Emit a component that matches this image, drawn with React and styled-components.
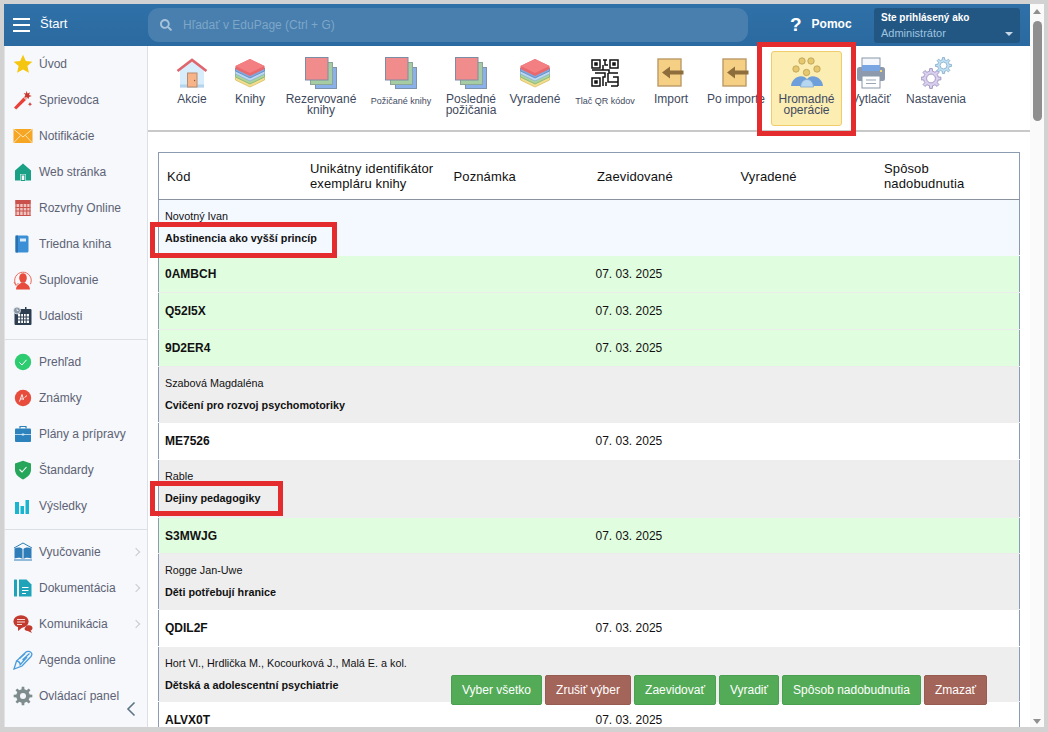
import React from 'react';
import styled, { createGlobalStyle } from 'styled-components';
import { FaSearch } from 'react-icons/fa';

const GlobalStyle = createGlobalStyle`
    html, body {
        margin: 0;
        height: 100%;
        overflow: hidden;
        background: #d2d2d2;
        font-family: "Liberation Sans", Arial, sans-serif;
    }
`;

// gear outline, used by the sidebar and the toolbar
function gearPath(cx, cy, outer, inner, teeth) {
    let d = '';
    const step = (Math.PI * 2) / teeth;
    for (let i = 0; i < teeth; i++) {
        const a = i * step;
        const pts = [
            [inner, a - step * 0.5],
            [inner, a - step * 0.27],
            [outer, a - step * 0.17],
            [outer, a + step * 0.17],
            [inner, a + step * 0.27],
        ];
        pts.forEach(([r, t], j) => {
            const x = (cx + r * Math.cos(t)).toFixed(2);
            const y = (cy + r * Math.sin(t)).toFixed(2);
            d += (i === 0 && j === 0 ? 'M' : 'L') + x + ' ' + y + ' ';
        });
    }
    return d + 'Z';
}

/* ---------- toolbar icons ---------- */

function HouseIcon() {
    return (
        <svg width="32" height="32" viewBox="0 0 32 32">
            <path d="M4 13 L16 3.5 L28 13 V30.5 H4 Z" fill="#d8edfc" />
            <path d="M4 27.5 H28 V30.5 H4 Z" fill="#b4d3ec" />
            <path d="M1.5 14 L16 3 L30.5 14" fill="none" stroke="#e0666e" strokeWidth="2.6" />
            <rect x="11.5" y="16" width="9.5" height="14" fill="#f6b488" stroke="#b98a6c" strokeWidth="1" />
            <circle cx="18.6" cy="23.5" r="0.7" fill="#8a5a3a" />
        </svg>
    );
}

function StackIcon() {
    const layers = [
        { y: 14, c: '#f3de8f', s: '#d9bd62' },
        { y: 11, c: '#a9d49b', s: '#7fb272' },
        { y: 8, c: '#bcd9f3', s: '#8db1d3' },
        { y: 5, c: '#7fa9e2', s: '#5f86bd' },
    ];
    return (
        <svg width="32" height="32" viewBox="0 0 32 32">
            {layers.map((l) => (
                <path
                    key={l.y}
                    d={`M1.5 ${l.y + 6} V${l.y + 9} L16 ${l.y + 16} L30.5 ${l.y + 9} V${l.y + 6} L16 ${l.y} Z`}
                    fill={l.c}
                    stroke={l.s}
                    strokeWidth="0.8"
                />
            ))}
            <path d="M1.5 9 L16 2 L30.5 9 V12 L16 19 L1.5 12 Z" fill="#e8686c" />
            <path d="M1.5 9 L16 2 L30.5 9 L16 16 Z" fill="#f37f82" />
        </svg>
    );
}

function SquaresIcon() {
    return (
        <svg width="32" height="32" viewBox="0 0 32 32">
            <rect x="10.5" y="10.5" width="21" height="21" fill="#8bb1ea" stroke="#7d93ad" />
            <rect x="5.5" y="5.5" width="22" height="22" fill="#a6cca4" stroke="#8ba596" />
            <rect x="0.5" y="0.5" width="22.5" height="22.5" fill="#f18c8c" stroke="#7a8ca6" />
        </svg>
    );
}

function QrIcon() {
    return (
        <svg width="28" height="28" viewBox="0 0 28 28" fill="none" stroke="#111" strokeWidth="1.5">
            <rect x="1" y="1" width="8" height="8" />
            <rect x="19" y="1" width="8" height="8" />
            <rect x="1" y="19" width="8" height="8" />
            <rect x="4" y="4" width="2" height="2" fill="#111" />
            <rect x="22" y="4" width="2" height="2" fill="#111" />
            <rect x="4" y="22" width="2" height="2" fill="#111" />
            <path d="M12 1 H16 M14 1 V6 H17 M12 6 V11 H1 M12 11 H18 V14 H27 M4 14 H14 V18 H12 V27 M17 14 V23 H27 M22 18 H27 V27 M20 27 H27 M15 27 V23" />
        </svg>
    );
}

function ImportIcon() {
    return (
        <svg width="28" height="30" viewBox="0 0 28 30">
            <rect x="1" y="1" width="23" height="27" fill="#f4cf84" stroke="#bc9a68" strokeWidth="1.4" />
            <path d="M5 14.5 L13 8.5 V12.5 H26.5 V16.5 H13 V20.5 Z" fill="#8e6d3c" />
        </svg>
    );
}

function PeopleIcon() {
    const heads = [[11, 4], [20, 4], [5, 12], [26, 12], [15.5, 15.5]];
    return (
        <svg width="32" height="32" viewBox="0 0 32 32">
            {heads.map(([x, y]) => (
                <circle key={x} cx={x} cy={y} r="3.2" fill="#e6c76e" stroke="#b89f55" strokeWidth="0.8" />
            ))}
            <path d="M0 29 C0.5 20 13 15 17 24 L16 29 Z" fill="#6f9fdb" />
            <path d="M32 29 C31.5 20 19 15 15 24 L16 29 Z" fill="#6f9fdb" />
            <path d="M9.5 30 C10 20 22 20 22.5 30 Z" fill="#b6d6f2" stroke="#83a8cc" strokeWidth="0.8" />
        </svg>
    );
}

function PrinterIcon() {
    return (
        <svg width="30" height="32" viewBox="0 0 30 32">
            <rect x="6" y="1" width="18" height="12" fill="#f4f7fb" stroke="#8a97a8" />
            <rect x="1" y="10" width="28" height="14" rx="2.5" fill="#8d9aae" />
            <rect x="6" y="8" width="18" height="6" fill="#79a6e2" />
            <rect x="24" y="13" width="2" height="2" fill="#f3d774" />
            <rect x="6" y="19" width="18" height="12" fill="#fff" stroke="#8a97a8" />
            <path d="M10 23 H20 M10 26.5 H20" stroke="#9aa6b6" strokeWidth="1.2" />
        </svg>
    );
}

function GearsIcon() {
    return (
        <svg width="31" height="32" viewBox="0 0 31 32">
            <path d={gearPath(10, 21.5, 10, 7.4, 8)} fill="#d9d0f0" stroke="#9387b6" strokeWidth="0.8" />
            <circle cx="10" cy="21.5" r="4.4" fill="#fff" stroke="#9387b6" strokeWidth="0.8" />
            <path d={gearPath(22.5, 8.5, 8, 5.8, 8)} fill="#bfe0f4" stroke="#7da7c6" strokeWidth="0.8" />
            <circle cx="22.5" cy="8.5" r="3.4" fill="#fff" stroke="#7da7c6" strokeWidth="0.8" />
        </svg>
    );
}

/* ---------- sidebar icons ---------- */

const side = { width: 20, height: 20, viewBox: '0 0 20 20' };

const sideIcons = {
    star: (
        <svg {...side}>
            <path d="M10 .8 L12.8 7 L19.4 7.7 L14.4 12.1 L15.9 18.8 L10 15.4 L4.1 18.8 L5.6 12.1 L.6 7.7 L7.2 7 Z" fill="#f5c60f" />
        </svg>
    ),
    wand: (
        <svg {...side}>
            <path d="M1 17.5 L10.5 7.5 L13 10 L3.2 19.5 Z" fill="#e8413a" />
            <path d="M10.5 7.5 L12.5 5.5 L15 8 L13 10 Z" fill="#f0a9a0" />
            <path d="M13.5 .8 L14.5 3.4 L17 2.4 L16 5 L18.8 6 L16 7 L15.6 9 L13.8 7 L11.4 7.4 L12.4 5 L10.6 3 L13 3.6 Z" fill="#c9342d" />
            <path d="M17 12 L17.6 13.6 L19.2 14.2 L17.6 14.8 L17 16.4 L16.4 14.8 L14.8 14.2 L16.4 13.6 Z" fill="#c9342d" />
        </svg>
    ),
    mail: (
        <svg {...side} viewBox="0 0 20 16" height="16">
            <rect x="0.5" y="1" width="19" height="14" fill="#f6a623" />
            <path d="M0.5 1 L10 9 L19.5 1 M0.5 15 L7.5 7.5 M19.5 15 L12.5 7.5" fill="none" stroke="#fbe3b5" strokeWidth="1" />
        </svg>
    ),
    home: (
        <svg {...side}>
            <path d="M10 1.5 L18 8.5 V18.5 H12.8 V12 H7.2 V18.5 H2 V8.5 Z" fill="#19a085" />
            <rect x="8.2" y="13" width="3.6" height="5.5" fill="none" stroke="#19a085" />
        </svg>
    ),
    grid: (
        <svg {...side}>
            <rect x="2.5" y="2" width="15" height="16" fill="#efc4c0" />
            <rect x="2.5" y="2" width="15" height="4" fill="#c9514c" />
            <path d="M2.5 9.5 H17.5 M2.5 13 H17.5 M2.5 17.5 H17.5 M3 2 V18 M6.7 2 V18 M10.2 2 V18 M13.8 2 V18 M17 2 V18" stroke="#c9514c" strokeWidth="1" />
        </svg>
    ),
    notebook: (
        <svg {...side}>
            <rect x="2.5" y="1.5" width="13" height="17" rx="1.5" fill="#3b8fd6" />
            <rect x="2.5" y="1.5" width="2.5" height="17" fill="#2a70b0" />
            <rect x="7" y="4.5" width="6" height="3" fill="#d8ecfa" />
        </svg>
    ),
    person: (
        <svg {...side}>
            <path d="M3 15 A8.3 8.3 0 1 1 17.4 14.2" fill="none" stroke="#ec6a5c" strokeWidth="1" />
            <path d="M1 12 L3 15.5 L5.5 13" fill="none" stroke="#ec6a5c" strokeWidth="1" />
            <ellipse cx="10" cy="8" rx="3.8" ry="4.8" fill="#e74c3c" />
            <path d="M3 19.5 C3.4 14.4 7 14.6 8 12.6 H12 C13 14.6 16.6 14.4 17 19.5 Z" fill="#e74c3c" />
        </svg>
    ),
    calendar: (
        <svg {...side}>
            <rect x="1.5" y="3" width="17" height="16" rx="1" fill="#2c3e50" />
            <rect x="5" y="8" width="11" height="9" fill="#fff" />
            <path d="M5 11 H16 M5 14 H16 M7.7 8 V17 M10.5 8 V17 M13.2 8 V17" stroke="#2c3e50" strokeWidth="1" />
            <circle cx="4" cy="4.5" r="3.5" fill="#8a98a6" stroke="#f5f7fa" strokeWidth="0.7" />
            <path d="M4 2.5 V4.5 H5.5" stroke="#fff" strokeWidth="0.7" fill="none" />
            <rect x="12" y="1" width="1.5" height="4" fill="#2c3e50" />
        </svg>
    ),
    check: (
        <svg {...side}>
            <circle cx="10" cy="10" r="8.2" fill="#2ecc71" />
            <path d="M6.5 10.5 L9 13 L13.5 7.8" fill="none" stroke="#fff" strokeWidth="1" />
        </svg>
    ),
    marks: (
        <svg {...side}>
            <circle cx="10" cy="10" r="8.2" fill="#e74c3c" />
            <path d="M6.5 13.5 L9 6.5 L10.5 11.5 M7.5 11 H11 M11.5 9.5 L14 7.5" fill="none" stroke="#fff" strokeWidth="0.9" />
        </svg>
    ),
    briefcase: (
        <svg {...side}>
            <path d="M7 4.5 V2.5 H13 V4.5" fill="none" stroke="#2c82bd" strokeWidth="1.2" />
            <rect x="2" y="4.5" width="16" height="13.5" rx="1" fill="#2c82bd" />
            <path d="M2 10.5 H18" stroke="#d5e8f5" strokeWidth="0.8" />
            <rect x="8.5" y="9.5" width="3" height="2" rx="1" fill="#d5e8f5" />
        </svg>
    ),
    shield: (
        <svg {...side}>
            <path d="M10 .8 L18 3.6 V10 C18 14.5 14 17.6 10 19.4 C6 17.6 2 14.5 2 10 V3.6 Z" fill="#25a65a" />
            <path d="M6.5 9.5 L9 12 L13.5 7" fill="none" stroke="#fff" strokeWidth="1.1" />
        </svg>
    ),
    bars: (
        <svg {...side}>
            <rect x="2" y="6" width="4" height="12" fill="#17b5cf" />
            <rect x="7.5" y="10" width="3.5" height="8" fill="#17b5cf" />
            <rect x="12.5" y="4" width="3.5" height="14" fill="#17b5cf" />
        </svg>
    ),
    book: (
        <svg {...side}>
            <path d="M1 6 L10 1 L19 6" fill="none" stroke="#2f7db8" strokeWidth="1" />
            <path d="M1.5 6.5 C5 5 8 5.5 9.5 7 V17 C8 15.8 5 15.4 1.5 16.5 Z" fill="#2f7db8" />
            <path d="M18.5 6.5 C15 5 12 5.5 10.5 7 V17 C12 15.8 15 15.4 18.5 16.5 Z" fill="#2f7db8" />
            <path d="M1 18 H19" stroke="#2f7db8" strokeWidth="1" />
        </svg>
    ),
    doc: (
        <svg {...side}>
            <rect x="1" y="1.5" width="3" height="17" rx="0.6" fill="#1fa3b8" />
            <path d="M6 1.5 H13.5 L18.5 6.5 V18.5 H6 Z" fill="#1fa3b8" />
            <path d="M9 9.5 H15.5 M9 12.5 H15.5 M9 15.5 H13" stroke="#fff" strokeWidth="1.2" />
        </svg>
    ),
    chat: (
        <svg {...side}>
            <ellipse cx="8" cy="7.5" rx="7.6" ry="6.2" fill="#c33a2e" />
            <path d="M5 12 L5 17 L10 13 Z" fill="#c33a2e" />
            <path d="M4 5.5 H12 M4 8 H12 M4 10.5 H9" stroke="#f6dcd8" strokeWidth="1" />
            <path d="M13.5 11.8 C17 10.5 19.5 12 19.5 14 C19.5 15.5 18.5 16.2 17.6 16.6 L19 19 L14.8 17 C12.5 17 11.6 15.8 11.5 14.5 Z" fill="#c33a2e" />
        </svg>
    ),
    pen: (
        <svg {...side}>
            <path d="M1 19 L3.5 11 L13 2 C14.5 .8 17.5 1.5 18.5 3 C19.2 4.3 18.8 5.5 18 6.5 L9 16 Z M1 19 L9 16" fill="#eef6fc" stroke="#4a9bdc" strokeWidth="1.3" />
            <path d="M3.5 11 C5.5 11.2 7 12.5 7.2 14.6 L14 7 M6.5 8.5 L12 3.5 M9.5 10 L16.5 3.5" fill="none" stroke="#4a9bdc" strokeWidth="1.3" />
        </svg>
    ),
    gear: (
        <svg {...side}>
            <path d={gearPath(10, 10, 9.4, 6.8, 8)} fill="#7f8c8d" />
            <circle cx="10" cy="10" r="3" fill="#f5f7fa" />
        </svg>
    ),
};

/* ---------- data ---------- */

const menuGroups = [
    [
        ['star', 'Úvod'],
        ['wand', 'Sprievodca'],
        ['mail', 'Notifikácie'],
        ['home', 'Web stránka'],
        ['grid', 'Rozvrhy Online'],
        ['notebook', 'Triedna kniha'],
        ['person', 'Suplovanie'],
        ['calendar', 'Udalosti'],
    ],
    [
        ['check', 'Prehľad'],
        ['marks', 'Známky'],
        ['briefcase', 'Plány a prípravy'],
        ['shield', 'Štandardy'],
        ['bars', 'Výsledky'],
    ],
    [
        ['book', 'Vyučovanie', true],
        ['doc', 'Dokumentácia', true],
        ['chat', 'Komunikácia', true],
        ['pen', 'Agenda online'],
        ['gear', 'Ovládací panel'],
    ],
];

const tools = [
    { w: 54, icon: <HouseIcon />, label: 'Akcie' },
    { w: 62, icon: <StackIcon />, label: 'Knihy' },
    { w: 80, icon: <SquaresIcon />, label: 'Rezervované knihy' },
    { w: 80, icon: <SquaresIcon />, label: 'Požičané knihy', small: true },
    { w: 60, icon: <SquaresIcon />, label: 'Posledné požičania' },
    { w: 68, icon: <StackIcon />, label: 'Vyradené' },
    { w: 72, icon: <QrIcon />, label: 'Tlač QR kódov', small: true },
    { w: 60, icon: <ImportIcon />, label: 'Import' },
    { w: 70, icon: <ImportIcon />, label: 'Po importe' },
    { w: 71, icon: <PeopleIcon />, label: 'Hromadné operácie', active: true },
    { w: 58, icon: <PrinterIcon />, label: 'Vytlačiť' },
    { w: 72, icon: <GearsIcon />, label: 'Nastavenia' },
];

const columns = ['Kód', 'Unikátny identifikátor exempláru knihy', 'Poznámka', 'Zaevidované', 'Vyradené', 'Spôsob nadobudnutia'];

const DATE = '07. 03. 2025';

const rows = [
    { author: 'Novotný Ivan', title: 'Abstinencia ako vyšší princíp', h: 56, tone: 'blue' },
    { code: '0AMBCH', tone: 'green', h: 37 },
    { code: 'Q52I5X', tone: 'green', h: 37 },
    { code: '9D2ER4', tone: 'green', h: 37 },
    { author: 'Szabová Magdaléna', title: 'Cvičení pro rozvoj psychomotoriky', h: 56, tone: 'gray' },
    { code: 'ME7526', tone: 'white', h: 37 },
    { author: 'Rable', title: 'Dejiny pedagogiky', h: 58, tone: 'gray' },
    { code: 'S3MWJG', tone: 'green', h: 36 },
    { author: 'Rogge Jan-Uwe', title: 'Děti potřebují hranice', h: 56, tone: 'gray' },
    { code: 'QDIL2F', tone: 'white', h: 37 },
    { author: 'Hort Vl., Hrdlička M., Kocourková J., Malá E. a kol.', title: 'Dětská a adolescentní psychiatrie', h: 55, tone: 'gray' },
    { code: 'ALVX0T', tone: 'white', h: 37 },
];

const actions = [
    ['Vyber všetko', 91, 'green'],
    ['Zrušiť výber', 86, 'brown'],
    ['Zaevidovať', 82, 'green'],
    ['Vyradiť', 60, 'green'],
    ['Spôsob nadobudnutia', 139, 'green'],
    ['Zmazať', 63, 'brown'],
];

function App() {
    return (
        <>
            <GlobalStyle />
            <Frame>
                <Page>
                    <TopBar>
                        <StartBlock>
                            <Burger>
                                <span />
                                <span />
                                <span />
                            </Burger>
                            <StartText>Štart</StartText>
                        </StartBlock>
                        <SearchBox>
                            <FaSearch size={12} color="#a6c2da" />
                            <SearchText>Hľadať v EduPage (Ctrl + G)</SearchText>
                        </SearchBox>
                        <HelpBlock>
                            <HelpMark>?</HelpMark>
                            <HelpText>Pomoc</HelpText>
                        </HelpBlock>
                        <UserBox>
                            <UserTitle>Ste prihlásený ako</UserTitle>
                            <UserName>Administrátor</UserName>
                            <Caret />
                        </UserBox>
                    </TopBar>
                    <Body>
                        <Sidebar>
                            {menuGroups.map((group, i) => (
                                <MenuGroup key={i}>
                                    {group.map(([icon, text, more]) => (
                                        <MenuItem key={text}>
                                            <MenuIcon>{sideIcons[icon]}</MenuIcon>
                                            <MenuText>{text}</MenuText>
                                            {more && <MoreArrow />}
                                        </MenuItem>
                                    ))}
                                </MenuGroup>
                            ))}
                            <Collapse>
                                <svg width="10" height="16" viewBox="0 0 10 16" fill="none" stroke="#5d7386" strokeWidth="1.6">
                                    <path d="M8.5 1.5 L2 8 L8.5 14.5" />
                                </svg>
                            </Collapse>
                        </Sidebar>
                        <Main>
                            <Toolbar>
                                {tools.map((t) => (
                                    <Tool key={t.label} $w={t.w} $active={t.active}>
                                        <ToolIcon>{t.icon}</ToolIcon>
                                        <ToolLabel $small={t.small}>{t.label}</ToolLabel>
                                    </Tool>
                                ))}
                            </Toolbar>
                            <Content>
                                <Table>
                                    <thead>
                                        <tr>
                                            {columns.map((c) => (
                                                <HeadCell key={c}>{c}</HeadCell>
                                            ))}
                                        </tr>
                                    </thead>
                                    <tbody>
                                        {rows.map((r) => (
                                            <Row key={r.title || r.code} $h={r.h} $tone={r.tone}>
                                                {r.title ? (
                                                    <GroupCell colSpan={6}>
                                                        <Author>{r.author}</Author>
                                                        <BookTitle>{r.title}</BookTitle>
                                                    </GroupCell>
                                                ) : (
                                                    <>
                                                        <CodeCell>{r.code}</CodeCell>
                                                        <td />
                                                        <td />
                                                        <DateCell>{DATE}</DateCell>
                                                        <td />
                                                        <td />
                                                    </>
                                                )}
                                            </Row>
                                        ))}
                                    </tbody>
                                </Table>
                            </Content>
                            <ActionBar>
                                {actions.map(([text, w, tone]) => (
                                    <ActionButton key={text} $w={w} $tone={tone}>
                                        {text}
                                    </ActionButton>
                                ))}
                            </ActionBar>
                        </Main>
                    </Body>
                    <Marker $x={753} $y={38} $w={99} $h={94} />
                    <Marker $x={146} $y={218} $w={187} $h={36} />
                    <Marker $x={146} $y={477} $w={133} $h={35} />
                </Page>
                <Scrollbar>
                    <ArrowUp />
                    <Thumb />
                    <ArrowDown />
                </Scrollbar>
            </Frame>
        </>
    );
}

const Frame = styled.div`
    display: flex;
    width: 1040px;
    height: 723px;
    margin: 4px 4px 0;
    background: #fff;
    overflow: hidden;
`;

const Page = styled.div`
    position: relative;
    flex: 1;
    min-width: 0;
    display: flex;
    flex-direction: column;
`;

const TopBar = styled.header`
    height: 42px;
    flex: none;
    display: flex;
    align-items: center;
    background: linear-gradient(#2f70a8, #2a6aa0);
    color: #fff;
    z-index: 2;
`;

const StartBlock = styled.div`
    width: 144px;
    display: flex;
    align-items: center;
    gap: 10px;
    padding-left: 9px;
    box-sizing: border-box;
`;

const Burger = styled.div`
    display: flex;
    flex-direction: column;
    gap: 4px;
    width: 17px;

    span {
        height: 2px;
        background: #fff;
    }
`;

const StartText = styled.div`
    font-size: 13px;
    margin-top: -3px;
`;

const SearchBox = styled.div`
    width: 600px;
    height: 34px;
    display: flex;
    align-items: center;
    gap: 11px;
    padding-left: 12px;
    box-sizing: border-box;
    border-radius: 11px;
    background: #487fae;
`;

const SearchText = styled.div`
    font-size: 12px;
    color: #7ea6c8;
`;

const HelpBlock = styled.div`
    width: 126px;
    display: flex;
    align-items: center;
    gap: 10px;
    padding-left: 42px;
    box-sizing: border-box;
`;

const HelpMark = styled.div`
    font-size: 19px;
    font-weight: 700;
`;

const HelpText = styled.div`
    font-size: 12px;
    font-weight: 700;
    margin-top: -3px;
`;

const UserBox = styled.div`
    position: relative;
    width: 146px;
    height: 35px;
    padding: 3px 0 0 7px;
    box-sizing: border-box;
    border-radius: 3px;
    background: #225783;
`;

const UserTitle = styled.div`
    font-size: 10px;
    font-weight: 700;
    line-height: 14px;
`;

const UserName = styled.div`
    font-size: 11px;
    line-height: 16px;
    color: #9fc4e0;
`;

const Caret = styled.div`
    position: absolute;
    right: 7px;
    bottom: 7px;
    border-left: 4px solid transparent;
    border-right: 4px solid transparent;
    border-top: 4px solid #c6d8e8;
`;

const Body = styled.div`
    flex: 1;
    min-height: 0;
    display: flex;
`;

const Sidebar = styled.nav`
    position: relative;
    width: 144px;
    flex: none;
    box-sizing: border-box;
    border-left: 1px solid #dfe3e8;
    border-right: 1px solid #dcdfe4;
    background: #f6f8fb;
`;

const MenuGroup = styled.div`
    & + & {
        margin-top: 5px;
        padding-top: 4px;
        border-top: 1px solid #dcdfe4;
    }
`;

const MenuItem = styled.div`
    position: relative;
    height: 36px;
    display: flex;
    align-items: center;
    gap: 6px;
    padding-left: 8px;
`;

const MenuIcon = styled.div`
    width: 20px;
    height: 20px;
    display: flex;
    align-items: center;
    justify-content: center;
`;

const MenuText = styled.div`
    font-size: 12px;
    color: #5d6275;
`;

const MoreArrow = styled.div`
    position: absolute;
    right: 8px;
    top: 15px;
    width: 5px;
    height: 5px;
    border-top: 1px solid #c6cbd1;
    border-right: 1px solid #c6cbd1;
    transform: rotate(45deg);
`;

const Collapse = styled.div`
    position: absolute;
    right: 11px;
    bottom: 10px;
    line-height: 0;
`;

const Main = styled.main`
    position: relative;
    flex: 1;
    min-width: 0;
    display: flex;
    flex-direction: column;
`;

const Toolbar = styled.div`
    height: 86px;
    flex: none;
    display: flex;
    align-items: flex-start;
    padding: 5px 0 0 17px;
    box-sizing: border-box;
    border-bottom: 2px solid #c9c9c9;
    background: #fff;
`;

const Tool = styled.div`
    width: ${(p) => p.$w}px;
    height: 75px;
    display: flex;
    flex-direction: column;
    align-items: center;
    padding-top: 4px;
    box-sizing: border-box;
    border: 1px solid ${(p) => (p.$active ? '#f0cd6a' : 'transparent')};
    border-radius: 3px;
    background: ${(p) => (p.$active ? '#fcedb3' : 'transparent')};
`;

const ToolIcon = styled.div`
    height: 34px;
    display: flex;
    align-items: center;
    justify-content: center;
`;

const ToolLabel = styled.div`
    margin-top: ${(p) => (p.$small ? '6px' : '4px')};
    font-size: ${(p) => (p.$small ? '9px' : '12px')};
    line-height: 11px;
    text-align: center;
    color: #3f4a5e;
`;

const Content = styled.div`
    flex: 1;
    min-height: 0;
    overflow: hidden;
    padding: 20px 10px 0;
`;

const Table = styled.table`
    width: 862px;
    table-layout: fixed;
    border-collapse: collapse;
    border: 1px solid #8c9cb0;
    border-bottom: 0;
    color: #111;
`;

const HeadCell = styled.th`
    height: 47px;
    padding: 0 8px;
    box-sizing: border-box;
    border-bottom: 1px solid #8b949e;
    font-size: 13px;
    font-weight: 400;
    line-height: 15px;
    letter-spacing: 0.12px;
    text-align: left;
    vertical-align: middle;
`;

const toneColors = {
    blue: '#f4f8ff',
    green: '#e1fde0',
    gray: '#eeeeee',
    white: '#ffffff',
};

const Row = styled.tr`
    height: ${(p) => p.$h}px;
    background: ${(p) => toneColors[p.$tone]};
    border-bottom: 1px solid ${(p) => (p.$tone === 'green' ? '#ececec' : 'transparent')};
`;

const GroupCell = styled.td`
    padding: 10px 6px 0;
    box-sizing: border-box;
    vertical-align: top;
`;

const Author = styled.div`
    font-size: 10.8px;
    line-height: 13px;
`;

const BookTitle = styled.div`
    margin-top: 9px;
    font-size: 10.8px;
    font-weight: 700;
    line-height: 13px;
`;

const CodeCell = styled.td`
    padding: 0 6px;
    font-size: 12px;
    font-weight: 700;
`;

const DateCell = styled.td`
    padding: 0 6.5px;
    font-size: 12px;
`;

const ActionBar = styled.div`
    position: absolute;
    top: 629px;
    right: 43px;
    display: flex;
    gap: 3px;
`;

const ActionButton = styled.button`
    width: ${(p) => p.$w}px;
    height: 30px;
    padding: 0;
    border: 1px solid ${(p) => (p.$tone === 'green' ? '#4b9f50' : '#965c52')};
    border-radius: 2px;
    background: ${(p) => (p.$tone === 'green' ? '#53ab57' : '#a3655a')};
    color: #fff;
    font-family: inherit;
    font-size: 12px;
`;

const Marker = styled.div`
    position: absolute;
    left: ${(p) => p.$x}px;
    top: ${(p) => p.$y}px;
    width: ${(p) => p.$w}px;
    height: ${(p) => p.$h}px;
    box-sizing: border-box;
    border: 5px solid #e42c2f;
    z-index: 3;
`;

const Scrollbar = styled.div`
    position: relative;
    width: 14px;
    flex: none;
    background: #fafafa;
`;

const Thumb = styled.div`
    position: absolute;
    left: 3px;
    top: 17px;
    width: 9px;
    height: 100px;
    border-radius: 5px;
    background: #8f8f8f;
`;

const ArrowUp = styled.div`
    position: absolute;
    left: 3px;
    top: 5px;
    border-left: 4.5px solid transparent;
    border-right: 4.5px solid transparent;
    border-bottom: 5px solid #8f8f8f;
`;

const ArrowDown = styled.div`
    position: absolute;
    left: 3px;
    bottom: 3px;
    border-left: 4.5px solid transparent;
    border-right: 4.5px solid transparent;
    border-top: 5px solid #8f8f8f;
`;

export default App;
